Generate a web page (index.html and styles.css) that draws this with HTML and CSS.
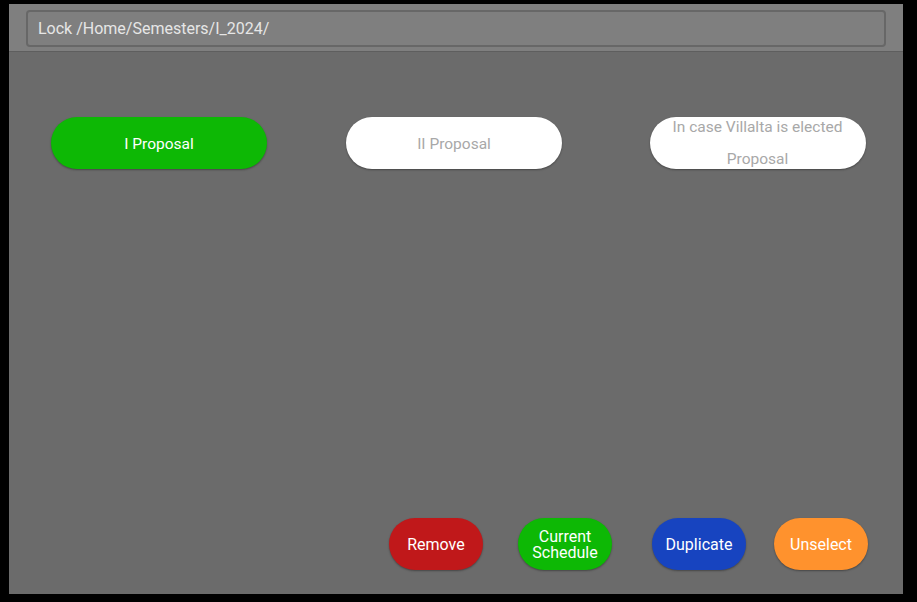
FILE: index.html
```html
<!DOCTYPE html>
<html>
<head>
<meta charset="utf-8">
<link rel="stylesheet" href="styles.css">
</head>
<body>
<div class="panel">
  <div class="header">
    <div class="path-box">Lock /Home/Semesters/I_2024/</div>
  </div>
  <div class="content">
    <div class="proposals">
      <div class="cell"><button class="pill pill-active">I Proposal</button></div>
      <div class="cell"><button class="pill pill-idle pill-mid">II Proposal</button></div>
      <div class="cell"><button class="pill pill-idle pill-tall">In case Villalta is elected Proposal</button></div>
    </div>
    <div class="actions">
      <button class="act act-red">Remove</button>
      <button class="act act-green gap-a">Current Schedule</button>
      <button class="act act-blue gap-b">Duplicate</button>
      <button class="act act-orange gap-c">Unselect</button>
    </div>
  </div>
</div>
</body>
</html>
```

FILE: styles.css
```css
html, body {
  margin: 0;
  padding: 0;
  background: #000;
  width: 917px;
  height: 602px;
  overflow: hidden;
  font-family: Roboto, "Noto Sans", sans-serif;
}

.panel {
  margin: 4px 0 0 9px;
  width: 894px;
  height: 590px;
  background: #6b6b6b;
  display: flex;
  flex-direction: column;
}

.header {
  background: #7f7f7f;
  border-bottom: 1px solid #5e5e5e;
  box-sizing: border-box;
  height: 48px;
  padding: 6px 17px 0 17px;
}

.path-box {
  height: 37px;
  box-sizing: border-box;
  border: 2px solid #676767;
  border-radius: 4px;
  background: #7f7f7f;
  color: #e6e6e6;
  font-size: 16px;
  line-height: 33px;
  padding-left: 10px;
}

.content {
  flex: 1;
  display: flex;
  flex-direction: column;
  justify-content: space-between;
  padding: 65px 0 24px 0;
}

.proposals {
  display: grid;
  grid-template-columns: repeat(3, 1fr);
}

.cell {
  display: flex;
  justify-content: center;
}

button {
  font-family: inherit;
  border: none;
  cursor: pointer;
  padding: 0;
}

.pill {
  width: 216px;
  height: 52px;
  border-radius: 26px;
  font-size: 15.5px;
  padding-top: 2px;
  box-shadow: 0 1px 2px rgba(0,0,0,0.35);
}

.pill-active {
  background: #0db805;
  color: #fff;
  margin-left: 2px;
}

.pill-idle {
  background: #fff;
  color: #a8a8a8;
}

.pill-mid {
  margin-left: -4px;
}

.pill-tall {
  line-height: 32px;
  padding: 0 12px;
  display: flex;
  align-items: center;
  justify-content: center;
  margin-left: 7px;
}

.actions {
  display: flex;
  justify-content: flex-end;
  padding-right: 35px;
}

.act {
  width: 94px;
  height: 52px;
  border-radius: 26px;
  color: #fff;
  font-size: 16px;
  line-height: 16px;
  padding-top: 2px;
  box-shadow: 0 1px 2px rgba(0,0,0,0.35);
}

.act-red { background: #c0181a; }
.act-green { background: #0db805; }
.act-blue { background: #1744c0; }
.act-orange { background: #ff922d; }

.gap-a { margin-left: 35px; }
.gap-b { margin-left: 40px; }
.gap-c { margin-left: 28px; }
```
